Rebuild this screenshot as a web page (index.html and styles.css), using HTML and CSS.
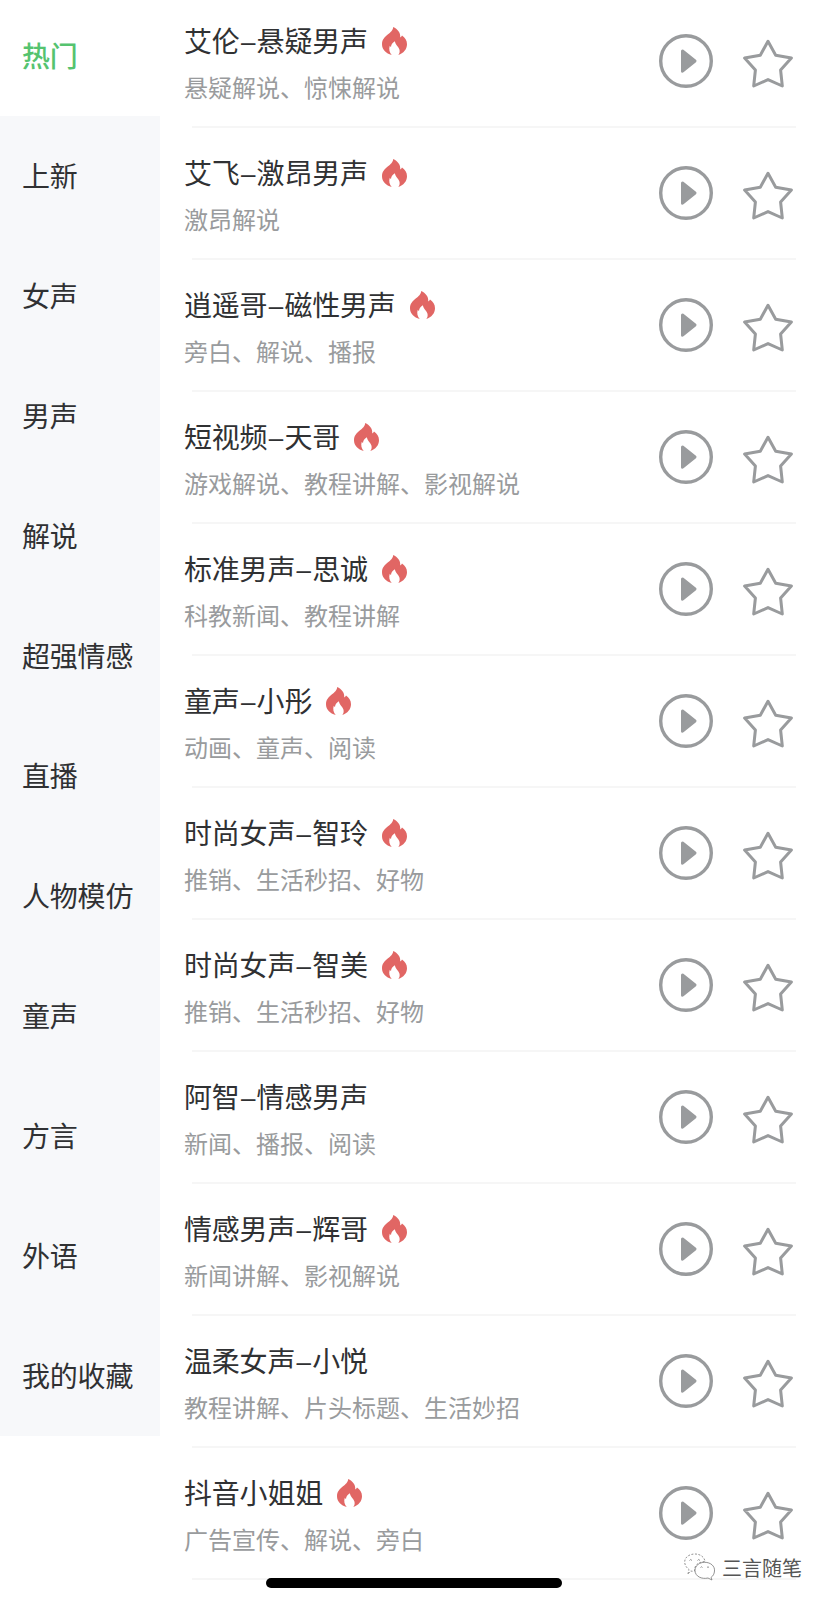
FILE: index.html
```html
<!DOCTYPE html>
<html lang="zh-CN">
<head>
<meta charset="utf-8">
<title>配音选择</title>
<link rel="stylesheet" href="styles.css">
</head>
<body>
<svg class="defs" width="0" height="0">
  <symbol id="fire" viewBox="0 0 25 28"><path d="M11.2 0C15.500 2 18.800 5.500 18.200 10.600C19.200 10 19.800 9.300 20 8.600C23 10.500 25 13.500 25 17.300C25 22.300 21.500 26.300 16.300 28C17.600 26.300 18 24.600 17.400 22.500C16.800 20.400 15.500 19.400 14.300 17.700C13.500 16.500 13 15.300 12.900 14.200C10.300 15.700 9.200 17.500 9 20C8.500 19.700 8.100 19.300 7.800 18.700C6.600 22 7.500 25.500 9.700 28C4 26.500 0 22.500 0 17.300C0 12.700 2.600 10.300 5.700 7.600C8.500 5.200 11 3.500 11.200 0Z"/></symbol>
  <symbol id="play" viewBox="0 0 54 54"><circle cx="27" cy="27" r="25.300" fill="none" stroke="currentColor" stroke-width="3.400"/><path d="M23.500 17L36 27L23.500 37.200Z" fill="currentColor" stroke="currentColor" stroke-width="3" stroke-linejoin="round"/></symbol>
  <symbol id="star" viewBox="0 0 50 49"><path d="M25 2.200L32.700 16.200L48.400 19L37.600 31L39.300 47L25 40.600L10.700 47L12.400 31L1.600 19L17.300 16.200Z" fill="none" stroke="currentColor" stroke-width="3" stroke-linejoin="round"/></symbol>
</svg>
<div class="page">
  <nav class="sidebar" id="sidebar"></nav>
  <main class="voices" id="voices"></main>
  <div class="home-bar"></div>
  <div class="watermark">
    <svg width="33" height="28" viewBox="0 0 33 28" fill="#fff" stroke="#777" stroke-width=".8">
      <path stroke-dasharray="2 1.500" d="M5 21L6 16.500C-1.500 11 1 1.500 11.500 1C17 .8 21.500 4 22 8.500C15 9 11 12.500 11.700 18C10 18.500 8.500 18.200 7.500 18Z"/>
      <path d="M28 24.500L29 27L25 25C19 26.500 12 23.500 12 17.500C12 12.500 16.500 9.300 21.800 9.300C27.500 9.300 32 13 31.500 18C31.300 21 30 23 28 24.500Z"/>
      <path d="M6.500 7.500Q7.500 5.500 9 7.500M14.500 7.500Q15.500 5.500 17 7.500M17.500 14.500Q18.500 13 19.500 14.500M24 14.500Q25 13 26 14.500"/>
    </svg>
    <span>三言随笔</span>
  </div>
</div>
<script src="app.js"></script>
</body>
</html>
```
FILE: styles.css
```css
body {
  margin: 0;
  background: #fff;
  font-family: "Noto Sans CJK SC", sans-serif;
  color: #303133;
}
.defs { position: absolute; }
.page {
  position: relative;
  display: flex;
  align-items: flex-start;
  width: 828px;
  height: 1603px;
  overflow: hidden;
}
.sidebar {
  width: 160px;
  flex: none;
  margin-top: -4px;
  background: #f7f8fa;
}
.category {
  display: flex;
  align-items: center;
  box-sizing: border-box;
  height: 120px;
  padding: 0 0 2px 22px;
  font-size: 28px;
  letter-spacing: -.2px;
}
.category.active {
  background: #fff;
  color: #55c36f;
  font-weight: 500;
}
.voices {
  flex: 1;
  margin-top: -4px;
}
.voice {
  position: relative;
  display: flex;
  box-sizing: border-box;
  height: 132px;
  padding: 23px 35px 0 24px;
}
.voice::after {
  content: "";
  position: absolute;
  left: 32px;
  right: 32px;
  bottom: 0;
  height: 2px;
  background: #f6f6f6;
}
.info { flex: 1; }
.name {
  display: flex;
  align-items: center;
  height: 42px;
  font-size: 28px;
  line-height: 42px;
  letter-spacing: -.2px;
}
.dash {
  width: 17px;
  padding-top: 4px;
  text-align: center;
  font-family: "Liberation Sans", sans-serif;
  font-size: 26px;
}
.fire {
  width: 25px;
  height: 28px;
  margin: 2px 0 0 14px;
  fill: #e16664;
}
.tags {
  margin-top: 8px;
  font-size: 24px;
  line-height: 36px;
  color: #999b9d;
}
.play, .star { color: #999b9d; flex: none; }
.play { width: 54px; height: 54px; margin-top: 15px; }
.star { width: 50px; height: 49px; margin: 20px 0 0 30px; }
.home-bar {
  position: absolute;
  left: 266px;
  top: 1578px;
  width: 296px;
  height: 10px;
  border-radius: 5px;
  background: #000;
}
.watermark {
  position: absolute;
  left: 683px;
  top: 1553px;
  display: flex;
  font-size: 20px;
  line-height: 30px;
  color: #555;
}
.watermark span { margin-left: 6px; }
```
FILE: app.js
```js
const categories = ["热门", "上新", "女声", "男声", "解说", "超强情感", "直播", "人物模仿", "童声", "方言", "外语", "我的收藏"];

// name, tags, hot
const voices = [
  ["艾伦–悬疑男声", "悬疑解说、惊悚解说", true],
  ["艾飞–激昂男声", "激昂解说", true],
  ["逍遥哥–磁性男声", "旁白、解说、播报", true],
  ["短视频–天哥", "游戏解说、教程讲解、影视解说", true],
  ["标准男声–思诚", "科教新闻、教程讲解", true],
  ["童声–小彤", "动画、童声、阅读", true],
  ["时尚女声–智玲", "推销、生活秒招、好物", true],
  ["时尚女声–智美", "推销、生活秒招、好物", true],
  ["阿智–情感男声", "新闻、播报、阅读", false],
  ["情感男声–辉哥", "新闻讲解、影视解说", true],
  ["温柔女声–小悦", "教程讲解、片头标题、生活妙招", false],
  ["抖音小姐姐", "广告宣传、解说、旁白", true]
];

const icon = (id) => `<svg class="${id}"><use href="#${id}"/></svg>`;

document.getElementById("sidebar").innerHTML = categories
  .map((c, i) => `<div class="category${i === 0 ? " active" : ""}">${c}</div>`)
  .join("");

document.getElementById("voices").innerHTML = voices
  .map(([name, tags, hot]) => `<div class="voice">
    <div class="info">
      <div class="name">${name.replace("–", '<span class="dash">–</span>')}${hot ? icon("fire") : ""}</div>
      <div class="tags">${tags}</div>
    </div>
    ${icon("play")}${icon("star")}
  </div>`)
  .join("");
```
